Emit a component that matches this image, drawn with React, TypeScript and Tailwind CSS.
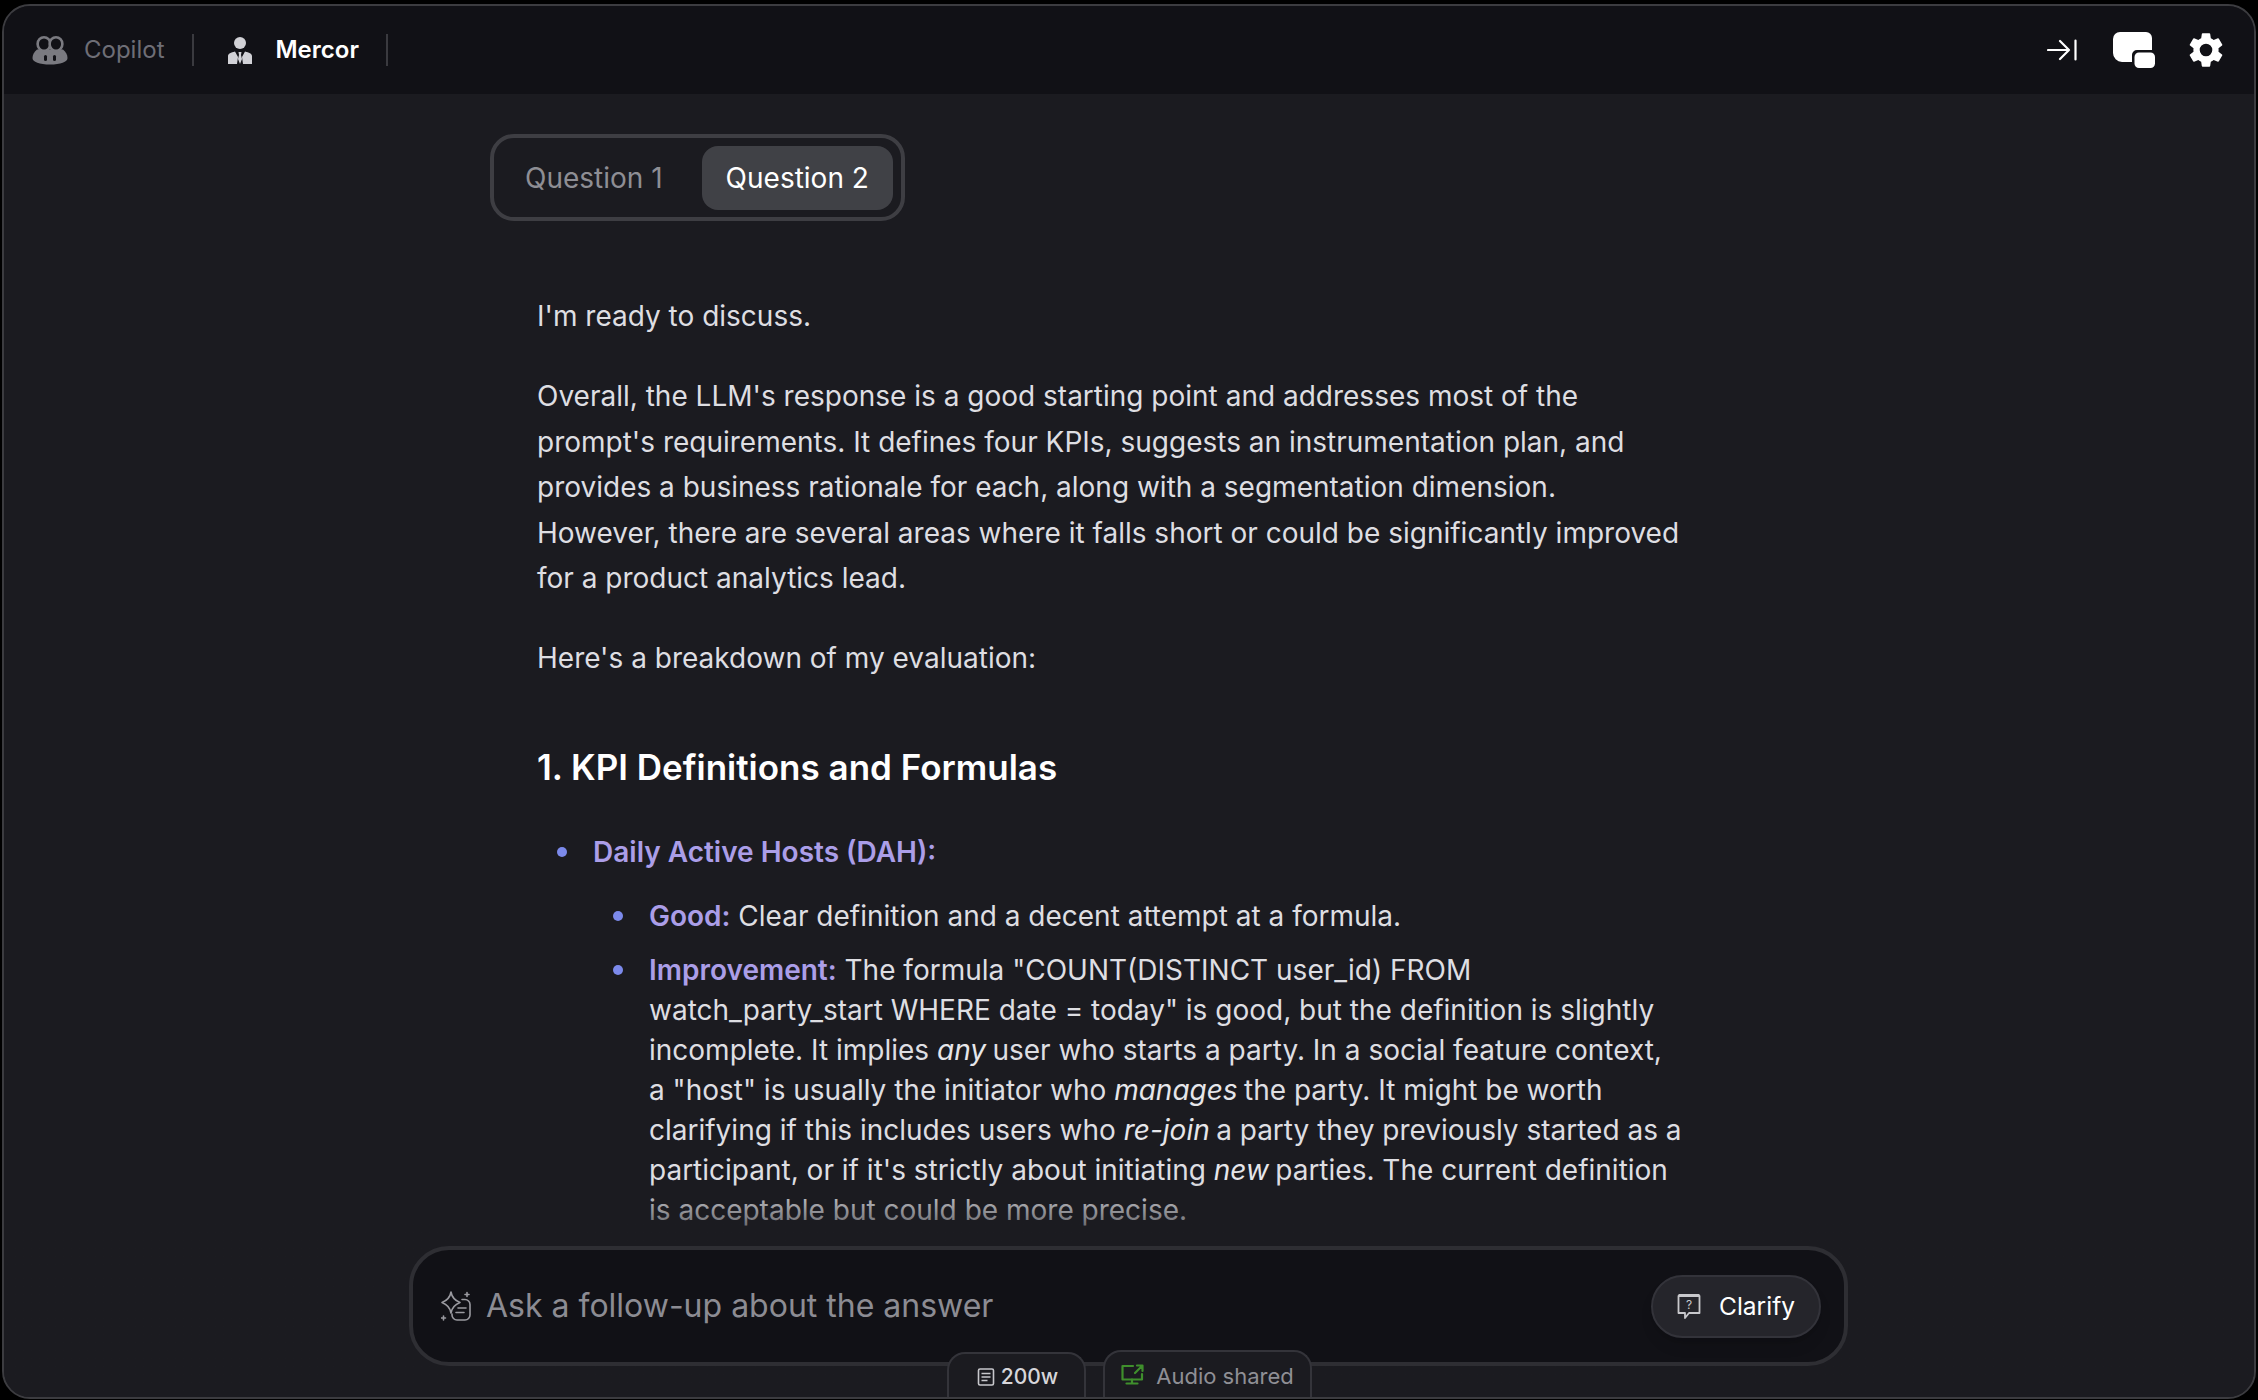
import { ReactNode } from 'react'

function CopilotIcon() {
  return (
    <svg viewBox="0 0 36 30" className="h-[30px] w-[36px]" fill="none">
      <path d="M0.500 23c0-3 1.500-6 4.500-8.500h26c3 2.500 4.500 5.500 4.500 8.500 0 4-7 6.500-17.500 6.500S0.500 27 0.500 23z" fill="#7a7a80" />
      <ellipse cx="12" cy="9" rx="6.400" ry="6.800" fill="#111116" stroke="#7a7a80" strokeWidth="2.600" />
      <ellipse cx="24" cy="9" rx="6.400" ry="6.800" fill="#111116" stroke="#7a7a80" strokeWidth="2.600" />
      <rect x="12" y="20" width="3" height="6" rx="1.500" fill="#111116" />
      <rect x="21" y="20" width="3" height="6" rx="1.500" fill="#111116" />
    </svg>
  )
}

function PersonIcon() {
  return (
    <svg viewBox="0 0 24 27" className="h-[27px] w-[24px]" fill="#d1d1d6">
      <circle cx="12" cy="6" r="6" />
      <path d="M0 27v-8c0-2.500 3-3.500 7-4.500L10 20l-1 7H0zM24 27v-8c0-2.500-3-3.500-7-4.500L14 20l1 7h9zM10.500 15h3l-.5 3 1 4-2 5-2-5 1-4z" />
    </svg>
  )
}

function CollapseIcon() {
  return (
    <svg viewBox="0 0 30 22" className="h-[22px] w-[30px]" fill="none" stroke="white" strokeWidth="2.200" strokeLinecap="round" strokeLinejoin="round">
      <path d="M1 11h21M13 2l9 9-9 9M28.500 1.500v19" />
    </svg>
  )
}

function ChatWindowsIcon() {
  return (
    <svg viewBox="0 0 42 36" className="h-[36px] w-[42px]" fill="white">
      <path d="M7 0h26a6 6 0 0 1 6 6v12H24a5 5 0 0 0-5 5v7H9a9 9 0 0 1-9-9V7a7 7 0 0 1 7-7z" />
      <rect x="21.500" y="20.500" width="20.500" height="15.500" rx="4.500" />
    </svg>
  )
}

function GearIcon() {
  return (
    <svg viewBox="0 0 24 24" className="h-[42px] w-[42px]" fill="white">
      <path d="M19.140 12.940c.04-.3.060-.61.060-.94 0-.32-.02-.64-.07-.94l2.030-1.580a.49.490 0 0 0 .12-.610l-1.920-3.320a.49.490 0 0 0-.590-.220l-2.390.960c-.5-.380-1.030-.7-1.620-.940l-.36-2.540a.480.480 0 0 0-.480-.410h-3.840a.480.480 0 0 0-.470.410l-.36 2.540c-.590.240-1.130.570-1.620.940l-2.390-.960a.480.480 0 0 0-.590.220L2.740 8.870a.480.480 0 0 0 .120.610l2.030 1.580c-.05.300-.09.630-.09.940s.02.640.07.940l-2.030 1.580a.490.490 0 0 0-.120.610l1.920 3.320c.12.220.370.290.590.220l2.390-.960c.5.380 1.030.7 1.620.940l.36 2.540c.05.240.24.410.48.410h3.840c.24 0 .44-.17.470-.41l.36-2.540c.590-.240 1.130-.560 1.620-.940l2.390.960c.22.080.470 0 .590-.220l1.920-3.320a.480.480 0 0 0-.120-.610l-2.010-1.580zM12 15.600A3.600 3.600 0 1 1 12 8.400a3.600 3.600 0 0 1 0 7.200z" />
    </svg>
  )
}

function SparkNoteIcon() {
  return (
    <svg viewBox="0 0 30 30" className="h-[30px] w-[30px]" fill="none" stroke="#9a9aa0" strokeWidth="1.600" strokeLinecap="round" strokeLinejoin="round">
      <path d="M10 1c.8 5 4 8.500 9 10.500-5 2-8.200 5.500-9 10.500-.8-5-4-8.500-9-10.500 5-2 8.200-5.500 9-10.500z" />
      <path d="M26 1.500v4M24 3.500h4M2.500 25v4M.5 27h4" />
      <path d="M21 8.500h3a5 5 0 0 1 5 5v10.500a5 5 0 0 1-5 5h-8a5 5 0 0 1-5-5v-1" />
      <path d="M17 17h8M15 21.500h8" />
    </svg>
  )
}

function QuestionBubbleIcon() {
  return (
    <svg viewBox="0 0 24 25" className="h-[25px] w-[24px]" fill="none" stroke="#c8c8cc" strokeWidth="1.800" strokeLinejoin="round">
      <path d="M1.500 2h21v17H12l-4 5v-5H1.500z" />
      <path d="M1.500 1.500h21" strokeWidth="3" />
      <text x="12" y="15" textAnchor="middle" fontSize="12" fill="#c8c8cc" stroke="none" fontFamily="Inter, sans-serif">?</text>
    </svg>
  )
}

function DocIcon() {
  return (
    <svg viewBox="0 0 18 18" className="h-[18px] w-[18px]" fill="none" stroke="#c8c8cc" strokeWidth="1.600">
      <rect x="1.500" y="1" width="15" height="16" rx="1.500" />
      <path d="M4.500 5.500h9M4.500 9h9M4.500 12.500h6" />
    </svg>
  )
}

function ScreenShareIcon() {
  return (
    <svg viewBox="0 0 23 21" className="h-[21px] w-[23px]" fill="none" stroke="#3f8f2c" strokeWidth="2.200" strokeLinecap="round" strokeLinejoin="round">
      <path d="M12 2H1.500v13.500h19.500V10" />
      <path d="M11 15.500v4M5.500 19.500h11M14 9l7-7M16 1.500h5.500V7" />
    </svg>
  )
}

function Strong({ children }: { children: ReactNode }) {
  return <strong className="font-semibold text-[#ab9ee8]">{children}</strong>
}

function Em({ children }: { children: ReactNode }) {
  return <em className="-mr-[1.500px] italic text-[#e6e6ea]">{children}</em>
}

function Bullet({ className, children }: { className?: string; children: ReactNode }) {
  return (
    <li className={`flex ${className ?? ''}`}>
      <span className="mr-[26px] mt-[15px] h-[10px] w-[10px] shrink-0 rounded-full bg-[#7c8aeb]" />
      <div className="min-w-0 flex-1">{children}</div>
    </li>
  )
}

export default function App() {
  return (
    <div className="h-[1400px] w-[2258px] overflow-hidden bg-black px-[2px] pb-[1px] pt-[4px] font-['Inter',sans-serif]">
      <div className="relative flex h-full flex-col overflow-hidden rounded-[28px] border-2 border-[#3c3c40] bg-[#1b1b20]">
        {/* Top bar */}
        <header className="flex h-[88px] shrink-0 items-center justify-between bg-[#111116] pl-[28px] pr-[27px]">
          <div className="flex items-center">
            <CopilotIcon />
            <span className="ml-[16px] text-[24px] text-[#6e6e76]">Copilot</span>
            <div className="ml-[28px] h-[32px] w-[2px] bg-[#3a3a3f]" />
            <div className="ml-[34px]"><PersonIcon /></div>
            <span className="ml-[23px] text-[24px] font-semibold text-white">Mercor</span>
            <div className="ml-[27px] h-[32px] w-[2px] bg-[#3a3a3f]" />
          </div>
          <div className="flex items-center">
            <CollapseIcon />
            <div className="ml-[36px]"><ChatWindowsIcon /></div>
            <div className="ml-[30px]"><GearIcon /></div>
          </div>
        </header>

        {/* Answer */}
        <main className="relative min-h-0 flex-1 overflow-hidden">
          <div className="ml-[486px] mt-[40px] inline-flex h-[87px] items-center rounded-[24px] border-[4px] border-[#3e3e43] bg-[#1b1b20] px-[8px]">
            <button className="px-[23px] text-[28px] text-[#8e8e94]">Question 1</button>
            <button className="ml-[16px] flex h-[64px] items-center rounded-[16px] bg-[#404146] px-[24px] text-[28px] text-white">Question 2</button>
          </div>

          <div className="ml-[533px] mt-[73px] w-[1146px] text-[28px] leading-[45.400px] text-[#dedee2]">
            <p>I'm ready to discuss.</p>
            <p className="mt-[35px]">
              Overall, the LLM's response is a good starting point and addresses most of the prompt's requirements. It defines four KPIs, suggests an instrumentation plan, and provides a business rationale for each, along with a segmentation dimension. However, there are several areas where it falls short or could be significantly improved for a product analytics lead.
            </p>
            <p className="mt-[35px]">Here's a breakdown of my evaluation:</p>
            <h2 className="mt-[58px] text-[35px] font-semibold leading-[54px] text-white">1. KPI Definitions and Formulas</h2>
            <ul className="mt-[38px] pl-[20px] leading-[40px]">
              <Bullet>
                <Strong>Daily Active Hosts (DAH):</Strong>
                <ul className="mt-[24px] pl-[20px]">
                  <Bullet><Strong>Good:</Strong> Clear definition and a decent attempt at a formula.</Bullet>
                  <Bullet className="mt-[14px]">
                    <Strong>Improvement:</Strong> The formula "COUNT(DISTINCT user_id) FROM watch_party_start WHERE date = today" is good, but the definition is slightly incomplete. It implies <Em>any</Em> user who starts a party. In a social feature context, a "host" is usually the initiator who <Em>manages</Em> the party. It might be worth clarifying if this includes users who <Em>re-join</Em> a party they previously started as a participant, or if it's strictly about initiating <Em>new</Em> parties. The current definition is acceptable but could be more precise.
                  </Bullet>
                </ul>
              </Bullet>
            </ul>
          </div>

          {/* Fade under the input */}
          <div className="pointer-events-none absolute inset-x-0 bottom-0 h-[215px] bg-gradient-to-b from-transparent to-[#1b1b20] to-35%" />
        </main>

        {/* Follow-up input */}
        <div className="absolute bottom-[31px] left-[405px] flex h-[120px] w-[1439px] items-center rounded-[40px] border-[4px] border-[#2e2e33] bg-[#111116] pl-[28px] pr-[23px]">
          <SparkNoteIcon />
          <span className="ml-[15px] flex-1 text-[32px] text-[#8c8c93]">Ask a follow-up about the answer</span>
          <button className="flex h-[63px] w-[170px] items-center justify-center gap-[18px] rounded-full border-2 border-[#33333a] bg-[#25252b] text-[24.500px] text-white shadow-lg">
            <QuestionBubbleIcon />
            Clarify
          </button>
        </div>

        {/* Status tabs */}
        <div className="absolute bottom-0 left-[943px] flex items-end gap-[17px]">
          <div className="flex h-[45px] w-[139px] items-start justify-center gap-[6px] rounded-t-[18px] border-2 border-b-0 border-[#34343a] bg-[#1b1b20] pl-[2px] pt-[10px] text-[21px] font-medium leading-[26px] text-[#d6d6da]">
            <span className="mt-[4px]"><DocIcon /></span>
            200w
          </div>
          <div className="flex h-[47px] w-[209px] items-start justify-center gap-[12px] rounded-t-[18px] border-2 border-b-0 border-[#34343a] bg-[#1b1b20] pt-[10px] text-[22px] leading-[28px] text-[#8f8f95]">
            <span className="mt-[2px]"><ScreenShareIcon /></span>
            Audio shared
          </div>
        </div>
      </div>
    </div>
  )
}
